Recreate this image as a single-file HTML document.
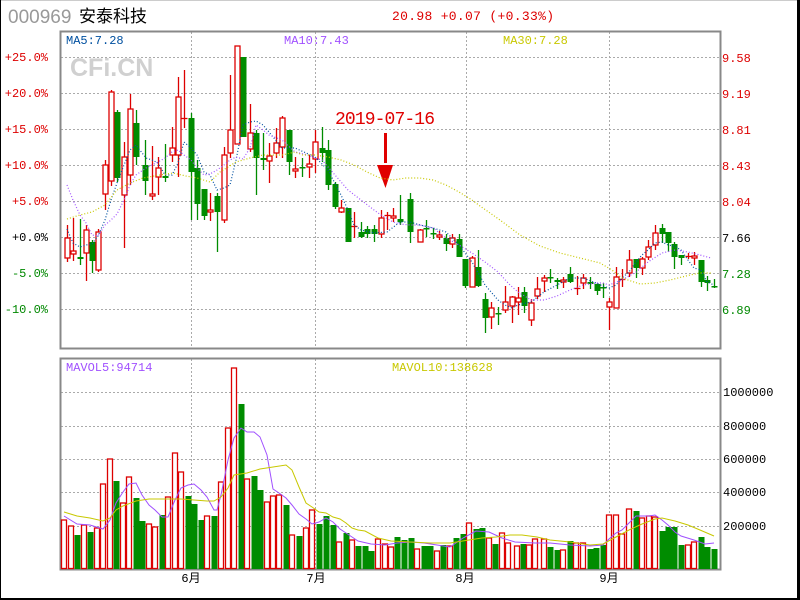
<!DOCTYPE html>
<html><head><meta charset="utf-8">
<style>
html,body{margin:0;padding:0;background:#fff;}
#w{position:relative;width:800px;height:600px;overflow:hidden;background:#fff;}
svg text{font-family:"Liberation Mono","Noto Sans CJK SC",monospace;}
</style></head><body>
<div id="w">
<svg id="s" width="800" height="600" xmlns="http://www.w3.org/2000/svg">
<rect x="0" y="0" width="800" height="600" fill="#fff"/>
<line x1="0" y1="0.5" x2="800" y2="0.5" stroke="#ccc"/>
<line x1="0.5" y1="0" x2="0.5" y2="600" stroke="#000"/>
<rect x="797" y="0" width="3" height="600" fill="#000"/>
<rect x="0" y="598" width="800" height="2" fill="#000"/>
<text x="8" y="23" font-size="19" fill="#999" style='font-family:"Liberation Sans",sans-serif'>000969</text>
<text x="79" y="22" font-size="17" fill="#000" style='font-family:"Liberation Sans","Noto Sans CJK SC",sans-serif'>安泰科技</text>
<text x="392" y="20" font-size="13" fill="#d00" textLength="162">20.98 +0.07 (+0.33%)</text>
<text x="70" y="76" font-size="25" font-weight="bold" fill="#d0d0d0" style='font-family:"Liberation Sans",sans-serif'>CFi.CN</text>
<g id="grid" stroke="#aaa" stroke-dasharray="2 2" stroke-width="1"></g>
<rect x="60.5" y="31.5" width="660" height="317" fill="none" stroke="#888" stroke-width="2"/>
<rect x="60.5" y="358.5" width="660" height="211" fill="none" stroke="#888" stroke-width="2"/>
<g font-size="12">
<text x="66" y="44" fill="#0050a0">MA5:7.28</text>
<text x="284" y="44" fill="#a050ff">MA10:7.43</text>
<text x="503" y="44" fill="#c8c800">MA30:7.28</text>
<text x="66" y="371" fill="#a050ff">MAVOL5:94714</text>
<text x="392" y="371" fill="#c8c800">MAVOL10:138628</text>
</g>
<g font-size="12" text-anchor="end">
<text x="48" y="61" fill="#d00">+25.0%</text>
<text x="48" y="97" fill="#d00">+20.0%</text>
<text x="48" y="133" fill="#d00">+15.0%</text>
<text x="48" y="169" fill="#d00">+10.0%</text>
<text x="48" y="205" fill="#d00">+5.0%</text>
<text x="48" y="241" fill="#000">+0.0%</text>
<text x="48" y="277" fill="#080">-5.0%</text>
<text x="48" y="313" fill="#080">-10.0%</text>
</g>
<g font-size="12">
<text x="722" y="62" fill="#d00">9.58</text>
<text x="722" y="98" fill="#d00">9.19</text>
<text x="722" y="134" fill="#d00">8.81</text>
<text x="722" y="170" fill="#d00">8.43</text>
<text x="722" y="206" fill="#d00">8.04</text>
<text x="722" y="242" fill="#000">7.66</text>
<text x="722" y="278" fill="#080">7.28</text>
<text x="722" y="314" fill="#080">6.89</text>
<text x="723" y="396" fill="#000">1000000</text>
<text x="723" y="430" fill="#000">800000</text>
<text x="723" y="463" fill="#000">600000</text>
<text x="723" y="496" fill="#000">400000</text>
<text x="723" y="530" fill="#000">200000</text>
</g>
<g font-size="12" fill="#000" text-anchor="middle" style='font-family:"Liberation Sans","Noto Sans CJK SC",sans-serif'>
<text x="191" y="582">6月</text>
<text x="316" y="582">7月</text>
<text x="465" y="582">8月</text>
<text x="609" y="582">9月</text>
</g>
<text x="385" y="124" font-size="18" fill="#e00000" text-anchor="middle" textLength="100">2019-07-16</text>
<rect x="384" y="133" width="3" height="30" fill="#e00000"/>
<polygon points="377,165 393,165 385.5,188" fill="#e00000"/>
<g id="c"></g>
</svg>
</div>
<script>
var NS="http://www.w3.org/2000/svg",s=document.getElementById('s'),g=document.getElementById('c'),gr=document.getElementById('grid');
function el(t,a,p){var e=document.createElementNS(NS,t);for(var k in a)e.setAttribute(k,a[k]);(p||g).appendChild(e);return e;}
[57,93,129,165,201,237,273,309,392,426,459,492,526].forEach(function(y){el('line',{x1:61,x2:720,y1:y+.5,y2:y+.5},gr);});
[191,315,466,609].forEach(function(x){el('line',{x1:x+.5,x2:x+.5,y1:32,y2:348},gr);el('line',{x1:x+.5,x2:x+.5,y1:359,y2:569},gr);});
var R="#dd0000",G="#008c00";
var C=[[67,238,258,225,262,1],[73,251,254,218,261,1],[80,257,259,219,265,0],[86,230,253,225,281,1],[92,242,261,240,273,0],[98,232,270,229,272,1],[105,165,194,160,210,1],[111,92,181,90,186,1],[117,112,178,110,182,0],[124,157,195,142,248,1],[130,109,175,94,185,1],[136,123,157,110,165,0],[145,165,181,140,195,0],[152,194,196,146,200,1],[158,168,177,157,195,1],[165,176,178,144,182,0],[172,148,155,127,162,1],[178,97,155,77,177,1],[184,118,118,70,128,1],[191,118,172,113,220,0],[197,168,204,160,220,0],[204,189,216,189,220,0],[210,210,212,193,221,1],[217,196,212,193,252,0],[224,155,220,147,223,1],[230,130,153,75,158,1],[237,46,144,46,144,1],[243,57,137,57,137,0],[250,133,149,104,152,1],[256,133,158,130,195,0],[263,158,160,133,170,0],[269,156,161,143,183,1],[276,143,153,128,158,1],[282,118,147,116,158,1],[289,130,162,130,175,0],[295,169,171,157,178,1],[302,167,167,158,177,0],[309,164,167,155,178,1],[315,142,159,130,173,1],[322,148,153,127,162,0],[328,150,185,140,190,0],[335,184,207,182,209,0],[341,208,212,200,213,1],[348,208,242,208,242,0],[354,226,226,212,238,1],[361,232,237,222,238,0],[367,229,234,226,238,0],[374,229,234,225,242,0],[381,218,234,210,238,1],[387,215,215,212,230,1],[393,216,218,208,222,1],[400,219,222,195,225,0],[410,199,232,193,243,0],[420,230,242,229,242,1],[426,228,229,220,237,0],[433,233,233,228,239,0],[439,235,237,231,240,1],[446,238,244,234,251,0],[452,238,244,234,248,1],[459,239,257,234,257,0],[465,259,286,259,288,0],[472,258,287,256,287,1],[478,267,286,250,287,0],[485,299,318,293,333,0],[491,308,317,302,329,1],[498,313,314,307,325,0],[505,302,310,286,313,1],[512,297,306,296,323,1],[518,298,302,287,315,1],[524,292,306,287,313,0],[531,303,320,299,326,1],[537,289,296,277,299,1],[544,278,281,275,292,1],[550,277,277,269,283,0],[557,280,282,278,289,0],[563,280,282,277,288,1],[570,274,282,267,283,0],[577,288,288,276,295,1],[583,278,283,274,289,1],[590,282,284,277,289,0],[597,284,291,283,295,0],[603,287,287,283,298,0],[609,302,307,298,330,1],[616,277,308,267,308,1],[622,279,279,269,287,1],[629,260,273,250,277,1],[636,259,268,259,278,0],[642,259,268,257,275,1],[648,247,257,240,260,1],[655,233,245,225,250,1],[662,228,234,224,243,0],[668,232,243,232,252,0],[674,244,257,242,269,0],[681,255,258,255,265,0],[688,256,256,253,259,1],[694,256,258,252,265,1],[701,260,282,260,287,0],[707,280,283,276,291,0],[714,286,287,279,288,0]];
C.forEach(function(c){var x=c[0],col=c[5]?R:G;
 if(c[5]){el('line',{x1:x+.5,x2:x+.5,y1:c[3],y2:c[1],stroke:col,'stroke-width':1.3});el('line',{x1:x+.5,x2:x+.5,y1:c[2],y2:c[4],stroke:col,'stroke-width':1.3});
  if(c[2]-c[1]<1){el('line',{x1:x-2.5,x2:x+3.5,y1:c[1]+.5,y2:c[1]+.5,stroke:col,'stroke-width':1.3});}
  else el('rect',{x:x-2,y:c[1],width:5,height:c[2]-c[1],fill:'#fff',stroke:col,'stroke-width':1.3});}
 else{el('line',{x1:x+.5,x2:x+.5,y1:c[3],y2:c[4],stroke:col,'stroke-width':1.3});
  el('rect',{x:x-2.5,y:c[1],width:6,height:Math.max(1.5,c[2]-c[1]),fill:col});}
});
function pl(p,col,d,w){el('polyline',{points:p.map(function(a){return a.join(',')}).join(' '),fill:'none',stroke:col,'stroke-width':w||1.2,'stroke-dasharray':d||'none'});}
pl([[67,229],[73,243],[80,247],[86,245],[92,244],[98,236],[105,220],[111,200],[117,183],[124,165],[130,150],[136,145],[146,158],[152,160],[158,163],[165,175],[172,175],[178,163],[184,142],[191,148],[197,155],[204,172],[210,175],[217,190],[224,188],[230,185],[236,160],[243,125],[250,122],[256,121],[263,125],[269,132],[282,148],[295,148],[315,157],[328,170],[341,195],[348,210],[354,225],[361,230],[374,233],[387,232],[400,222],[410,222],[420,225],[433,228],[446,232],[459,245],[472,262],[485,285],[498,300],[505,305],[512,308],[518,305],[531,302],[544,292],[557,285],[570,278],[583,278],[596,283],[603,286],[609,288],[616,285],[622,278],[629,272],[636,262],[642,255],[648,250],[655,243],[662,242],[668,245],[674,246],[681,250],[688,260],[694,268],[701,270],[707,282],[714,285]],"#0050a0","1 2");
pl([[67,185],[73,200],[80,215],[86,223],[92,235],[98,236],[105,225],[111,220],[117,214],[124,200],[130,185],[136,175],[146,168],[152,165],[158,162],[165,158],[172,152],[178,150],[184,155],[191,160],[197,168],[204,175],[210,174],[217,170],[224,165],[230,160],[236,157],[243,159],[250,148],[256,125],[263,130],[269,135],[282,140],[295,152],[308,155],[315,158],[322,160],[335,175],[348,190],[361,200],[374,210],[381,215],[393,222],[400,224],[410,225],[420,225],[433,228],[446,238],[459,245],[472,253],[485,262],[498,272],[510,285],[518,292],[531,300],[544,300],[557,296],[570,290],[583,285],[596,283],[603,283],[609,285],[622,280],[636,272],[648,262],[662,253],[675,250],[688,252],[700,255],[711,258]],"#a050ff","1 2");
pl([[67,219],[80,215],[92,212],[105,205],[117,190],[130,183],[143,178],[160,175],[173,173],[186,176],[197,178],[210,182],[220,172],[236,162],[250,158],[263,155],[282,155],[295,152],[303,155],[315,155],[328,157],[341,160],[354,165],[367,172],[380,178],[393,180],[406,178],[420,178],[433,180],[446,185],[459,192],[472,200],[480,206],[490,213],[500,220],[520,235],[540,246],[560,253],[580,258],[600,263],[612,270],[622,278],[640,284],[655,283],[670,280],[690,275],[700,273],[712,273]],"#c8c800","1 2");
var V=[[64,520,1],[71,526,1],[77,535,0],[84,525,1],[90,532,0],[97,528,1],[103,484,1],[110,459,1],[116,481,0],[123,503,1],[129,477,1],[136,498,0],[142,521,0],[149,524,1],[155,527,1],[162,515,0],[168,497,1],[175,453,1],[181,472,1],[188,496,0],[194,504,0],[201,520,0],[207,516,1],[214,516,0],[221,482,1],[228,428,1],[234,368,1],[241,404,0],[247,479,1],[254,476,0],[260,490,0],[267,502,1],[273,496,1],[279,495,1],[286,505,0],[292,535,1],[299,536,0],[306,528,1],[312,510,1],[319,524,0],[326,516,0],[333,525,0],[339,542,1],[346,533,0],[352,540,1],[358,546,0],[365,546,0],[371,551,0],[378,539,1],[385,544,1],[391,547,1],[397,537,0],[404,540,0],[411,538,0],[417,549,1],[424,546,0],[430,546,0],[437,551,1],[443,545,0],[450,546,1],[456,538,0],[463,534,0],[469,523,1],[476,529,0],[482,528,0],[489,538,1],[495,544,0],[502,533,1],[508,543,1],[517,546,1],[523,544,0],[529,545,1],[535,539,1],[544,539,1],[550,547,0],[557,550,0],[563,550,1],[570,541,0],[576,543,1],[583,543,1],[590,549,0],[596,548,0],[603,545,0],[609,515,1],[616,515,1],[622,534,1],[629,509,1],[636,511,0],[642,518,1],[649,516,1],[655,517,1],[662,531,0],[668,527,0],[674,527,0],[681,545,0],[688,545,1],[694,542,1],[701,537,0],[707,547,0],[714,549,0]];
V.forEach(function(v){var x=v[0];if(v[2])el('rect',{x:x-2.5,y:v[1],width:5,height:568.5-v[1],fill:'#fff',stroke:R,'stroke-width':1.3});else el('rect',{x:x-2.5,y:v[1],width:6,height:569-v[1],fill:G});});
pl([[64,516],[77,524],[90,525],[103,529],[110,520],[116,503],[123,492],[129,484],[136,483],[142,495],[149,505],[155,510],[162,517],[168,517],[175,500],[181,488],[188,485],[194,484],[201,490],[207,497],[214,510],[217,510],[221,495],[228,460],[234,438],[241,428],[247,432],[254,432],[260,437],[267,455],[273,489],[279,493],[286,498],[292,505],[299,514],[306,519],[312,524],[319,522],[326,518],[333,522],[340,529],[346,533],[352,537],[358,541],[371,544],[385,545],[397,543],[411,542],[424,543],[437,545],[450,547],[463,538],[476,531],[489,532],[502,538],[515,542],[535,543],[550,543],[570,545],[590,546],[603,545],[609,539],[616,533],[622,530],[629,523],[636,516],[649,516],[655,515],[662,520],[668,525],[675,532],[681,536],[694,540],[705,544],[714,543]],"#a050ff",null,1);
pl([[64,512],[77,516],[90,518],[103,521],[110,518],[116,510],[123,506],[136,501],[149,499],[168,499],[181,499],[194,500],[207,501],[214,501],[221,497],[228,488],[234,475],[247,473],[260,469],[273,467],[286,465],[292,470],[299,487],[306,503],[312,507],[319,512],[326,513],[333,517],[340,519],[346,523],[352,528],[358,530],[365,531],[378,538],[391,541],[410,542],[430,543],[450,543],[469,540],[482,538],[496,537],[510,535],[522,535],[537,537],[550,540],[570,542],[590,545],[603,544],[616,537],[629,530],[642,524],[655,519],[662,518],[675,521],[688,525],[700,530],[714,536]],"#c8c800",null,1);
</script>
</body></html>
